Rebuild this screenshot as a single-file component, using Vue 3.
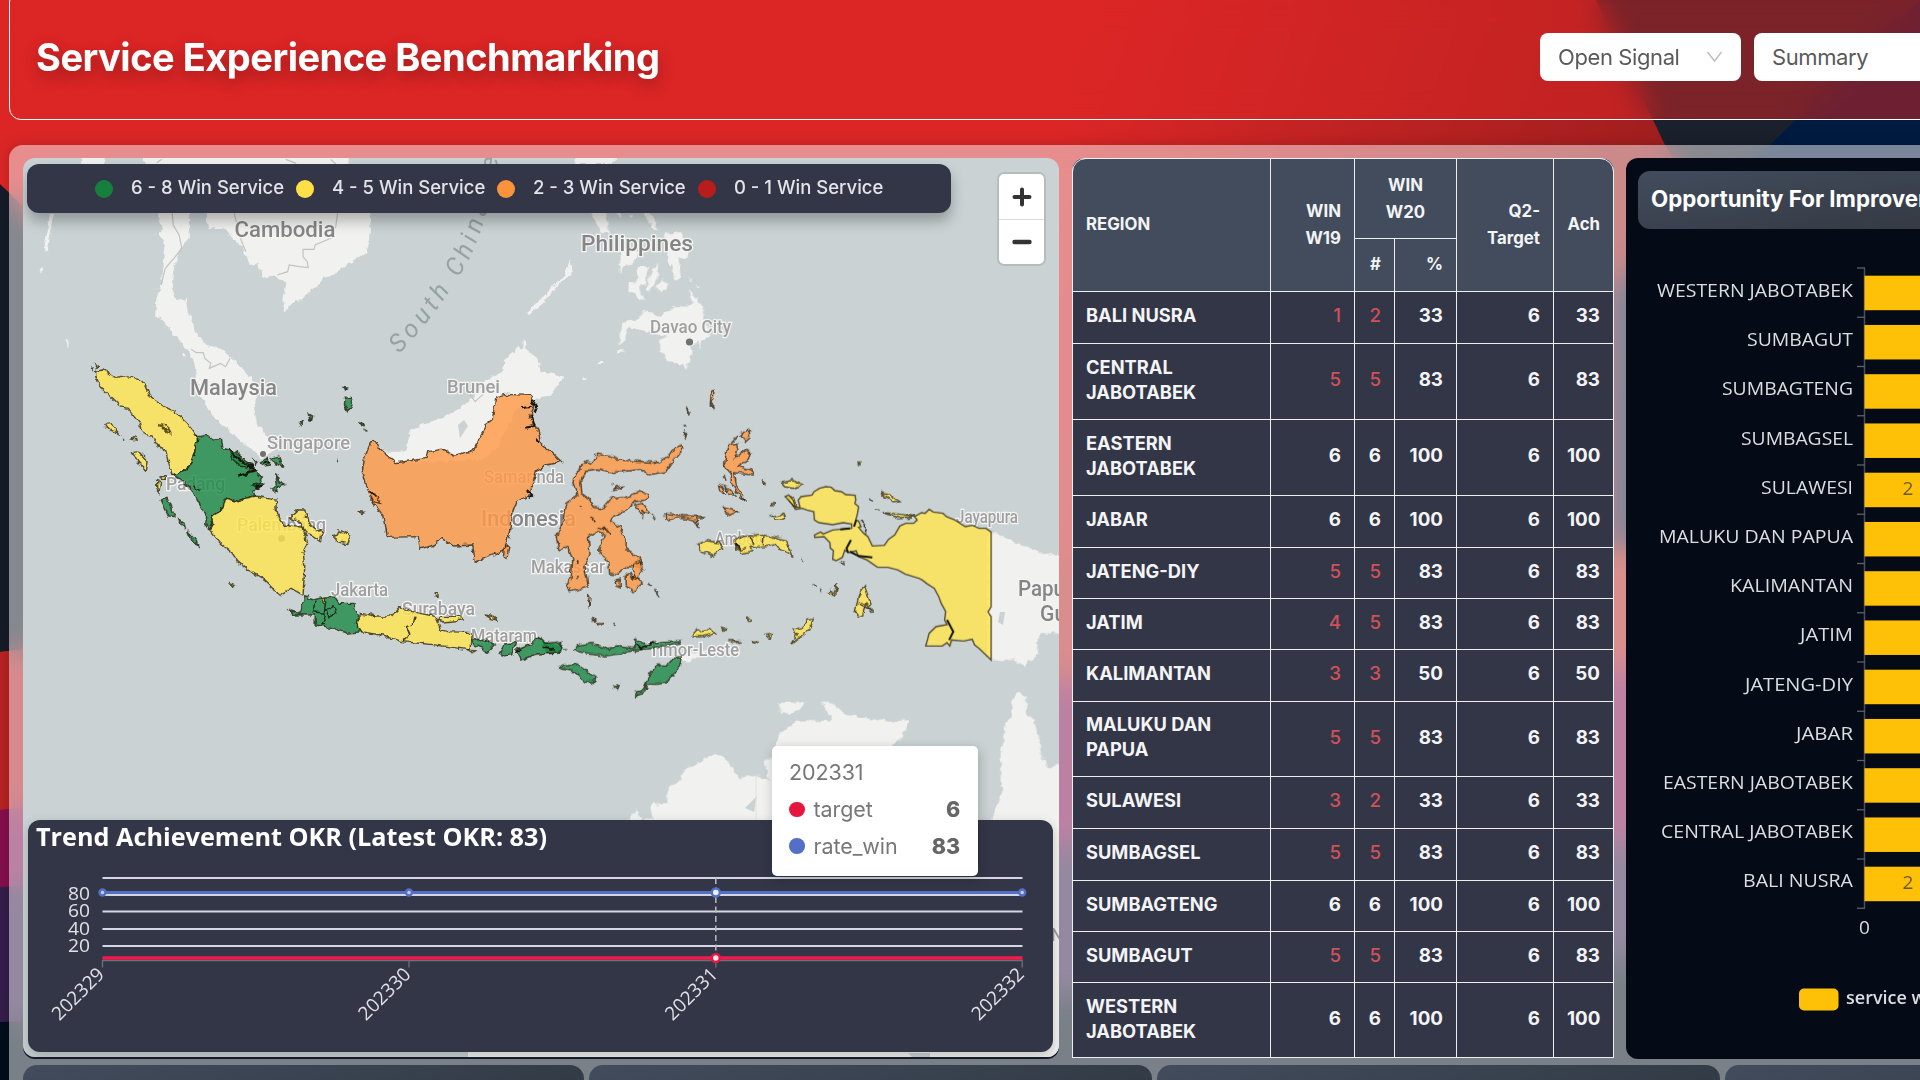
<script setup>
const wins = [
  { color: '#15803d', label: '6 - 8 Win Service' },
  { color: '#fde047', label: '4 - 5 Win Service' },
  { color: '#fb923c', label: '2 - 3 Win Service' },
  { color: '#b91c1c', label: '0 - 1 Win Service' }
]

const rows = [
  { name: 'BALI NUSRA', w19: 1, w20: 2, pct: 33, h: 52 },
  { name: 'CENTRAL JABOTABEK', w19: 5, w20: 5, pct: 83, h: 76 },
  { name: 'EASTERN JABOTABEK', w19: 6, w20: 6, pct: 100, h: 76 },
  { name: 'JABAR', w19: 6, w20: 6, pct: 100, h: 52 },
  { name: 'JATENG-DIY', w19: 5, w20: 5, pct: 83, h: 51 },
  { name: 'JATIM', w19: 4, w20: 5, pct: 83, h: 51 },
  { name: 'KALIMANTAN', w19: 3, w20: 3, pct: 50, h: 52 },
  { name: 'MALUKU DAN PAPUA', w19: 5, w20: 5, pct: 83, h: 75 },
  { name: 'SULAWESI', w19: 3, w20: 2, pct: 33, h: 52 },
  { name: 'SUMBAGSEL', w19: 5, w20: 5, pct: 83, h: 52 },
  { name: 'SUMBAGTENG', w19: 6, w20: 6, pct: 100, h: 51 },
  { name: 'SUMBAGUT', w19: 5, w20: 5, pct: 83, h: 51 },
  { name: 'WESTERN JABOTABEK', w19: 6, w20: 6, pct: 100, h: 76 }
]

const bars = [
  ['WESTERN JABOTABEK', 196], ['SUMBAGUT', 106], ['SUMBAGTENG', 131], ['SUMBAGSEL', 112],
  ['SULAWESI', 92, 2], ['MALUKU DAN PAPUA', 194], ['KALIMANTAN', 123], ['JATIM', 53],
  ['JATENG-DIY', 108], ['JABAR', 57], ['EASTERN JABOTABEK', 190], ['CENTRAL JABOTABEK', 192],
  ['BALI NUSRA', 110, 2]
]

const weeks = [[102, '202329'], [408.5, '202330'], [715.3, '202331'], [1021.7, '202332']]
const yTicks = [[80, 893], [60, 910.3], [40, 927.5], [20, 944.6]]

// text, x, baseline, width, size
const places = [
  ['Cambodia', 234.5, 237, 101, 22], ['Malaysia', 190, 395, 87, 22], ['Brunei', 447, 393, 53, 19],
  ['Singapore', 267, 449, 83, 18.5], ['Philippines', 581, 251, 112, 22], ['Davao City', 650, 333, 81, 18.5],
  ['Padang', 166, 490, 59, 18.5], ['Palembang', 237, 531, 89, 18.5], ['Jakarta', 331, 596, 57, 18.5],
  ['Surabaya', 402, 615, 73, 18.5], ['Mataram', 471, 642, 66, 18.5], ['Samarinda', 484, 483, 80, 18.5],
  ['Indonesia', 481, 526, 95, 22], ['Makassar', 531, 573, 74, 18.5], ['Ambon', 715, 545, 48, 18.5],
  ['Timor-Leste', 649, 656, 90, 18], ['Jayapura', 956, 523, 62, 18.5], ['Papua New', 1018, 596, 104, 22],
  ['Guinea', 1040, 621, 66, 22], ['N', 1051, 941, 12, 18]
]
</script>

<template>
  <div class="page">
    <svg class="backdrop" viewBox="0 0 1920 1080" width="1920" height="1080">
      <defs>
        <linearGradient id="red" gradientUnits="userSpaceOnUse" x1="1100" y1="0" x2="1750" y2="230">
          <stop offset="0" stop-color="#dc2626" />
          <stop offset="1" stop-color="#951d1d" />
        </linearGradient>
        <linearGradient id="red2" x1="0" y1="0" x2="1" y2="0">
          <stop offset="0" stop-color="#b92222" />
          <stop offset="1" stop-color="#c22a22" />
        </linearGradient>
      </defs>
      <rect width="1920" height="1080" fill="url(#red)" />
      <path d="M0 184L120 300L500 500L300 620L0 652Z" fill="#151c28" />
      <path d="M0 652L300 620L700 560L1300 560L1920 545V1080H0Z" fill="url(#red2)" />
      <path d="M1596 0L1665 145L1720 230L1920 0Z" fill="#1a202c" />
      <path d="M1920 0L1770 145L1612 290V545L1920 560Z" fill="#001a40" />
      <path d="M0 810L1065 680L1620 668L1920 660V1080H0Z" fill="#850f4e" />
      <path d="M0 887L1065 845L1620 845L1920 840V1080H0Z" fill="#351e4b" />
      <path d="M0 1022L1065 995L1620 960L1920 940V1080H0Z" fill="#000d1a" />
    </svg>

    <header class="header">
      <h1>Service Experience Benchmarking</h1>
      <div class="selects">
        <div class="select">
          <span>Open Signal</span>
          <svg width="17" height="12" viewBox="0 0 17 12"><path d="M1.5 1L8.5 10L15.5 1" fill="none" stroke="#bdbdbd" stroke-width="1.4" /></svg>
        </div>
        <div class="select"><span>Summary</span></div>
      </div>
    </header>

    <main class="board">
      <div class="main-row">
        <section class="map-card">
          <svg class="map" viewBox="23 158 1036 899" width="1036" height="899">
            <defs>
              <filter id="coast" x="-5%" y="-5%" width="110%" height="110%">
                <feTurbulence type="fractalNoise" baseFrequency="0.16" numOctaves="2" seed="4" />
                <feDisplacementMap in="SourceGraphic" scale="6" xChannelSelector="R" yChannelSelector="G" />
              </filter>
              <path id="sea" d="M399 354Q446 304 471 255Q494 205 502 130" />
            </defs>
            <rect x="23" y="158" width="1036" height="899" fill="#cad2d3" />

            <g class="land" filter="url(#coast)">
              <g transform="translate(0 150) scale(.34439 .33333)">
                <path d="M405 0L1015 0L1010 60L1050 140L1078 195L1070 290L1060 310L1020 335L965 375L935 380L930 400L895 430L860 455L825 487L820 470L832 395L800 378L770 385L755 365L750 340L725 345L710 300L680 270L650 235L605 240L598 190L590 150L550 190L548 265L525 290L505 350L498 410L512 450L540 445L545 490L560 510L565 545L600 585L640 595L690 640L735 690L745 740L738 770L745 820L770 850L800 900L760 925L720 890L650 830L610 790L590 750L570 690L565 640L545 600L510 560L465 500L450 500L455 440L470 400L480 290L460 250L470 240L460 190L440 100L430 60Z" />
                <path d="M215 0H320L300 42H240Z" />
                <path d="M145 190L157 192L142 260L135 312L125 290L137 240Z M112 362L124 348L120 366Z M190 570L200 572L198 590Z M530 612H540V620H530Z" />
                <path d="M1180 905L1190 840L1230 820L1300 800L1350 760L1380 740L1400 700L1425 680L1460 665L1465 635L1500 590L1518 600L1522 565L1530 600L1560 625L1570 660L1638 683L1615 710L1600 740L1560 745L1500 780L1440 900L1400 930L1250 935L1150 940L1095 890L1120 905Z" />
                <path d="M1528 492L1568 450L1608 408L1640 375L1656 325L1663 370L1630 395L1578 455L1535 495Z" />
              </g>
              <g transform="translate(540 150) scale(.34439 .33333)">
                <path d="M100 42L110 15L235 15L205 42Z M145 185L190 190L202 250L180 250L165 225Z M300 180L325 195L345 245L325 230Z M222 190L235 190L235 205Z M262 190L268 205L260 200Z" />
                <path d="M360 250L410 250L430 290L432 328L402 320L408 380L390 392L385 350L370 340L370 310Z" />
                <path d="M238 295L288 305L270 340L240 350L228 370Z M285 348L314 348L305 400L290 412L302 452L280 440L253 415L262 400L280 400Z M342 340L344 375L317 427L306 415L325 370Z M335 410L355 390L374 405L350 427Z M458 402L464 412H458Z M433 383L438 392H431Z" />
                <path d="M430 418L472 465L474 500L492 560L465 580L468 608L458 570L440 590L439 625L422 662L415 642L375 637L346 600L346 570L370 560L320 545L252 532L247 570L228 584L240 518L285 508L300 483L330 488L350 500L390 468L420 470L442 460Z" />
                <path d="M222 600H242V608H224Z M166 636H184V642H168Z M120 682H134V690H122Z" />
              </g>
              <g transform="translate(540 420) scale(.34439 .33333)">
                <path d="M1300 332L1400 375L1475 405L1525 408L1525 640L1460 640L1440 670L1447 700L1405 737L1370 720L1300 722Z" />
                <path d="M400 715L410 700L490 690L430 727Z" />
              </g>
              <g transform="translate(540 700) scale(.34439 .33333)">
                <path d="M698 8L765 8L760 25L730 42L693 35Z" />
                <path d="M250 370L280 328L300 358L330 355L322 313L370 312L370 265L410 240L415 210L470 185L510 160L545 180L580 235L620 225L665 240L650 190L680 160L693 105L740 65L835 62L850 55L815 2L855 18L890 45L1010 65L1075 60L1050 115L1010 150L980 370Z" />
                <path d="M1373 -5L1385 -28L1400 -20L1410 0L1415 45L1432 55L1447 110L1457 170L1480 205L1525 185L1525 1100L-210 1100L-210 1040L1300 1040L1310 365L1342 280L1337 160L1352 70L1365 60Z" />
              </g>
            </g>
            <path d="M908 1053H930V1057H912Z M745 808L757 796L754 812Z M458 425L464 420L468 426L460 438Z M1000 612L1005 612L1003 625L998 622Z" fill="#cad2d3" />

            <g class="borders" transform="translate(0 150) scale(.34439 .33333)">
              <path d="M500 190L503 225L520 255L528 295L505 325L480 355L475 375L468 405" />
              <path d="M680 190L690 230L700 270L714 305" />
              <path d="M805 375L835 365L840 345L870 350L895 353L892 335L880 320L880 298L912 298L915 285L960 265L965 250L975 230L980 190" />
              <path d="M555 598L570 608L590 608L595 625L612 640L608 655L640 640L655 650L668 625" />
              <path d="M455 38L470 28M830 28L860 40M960 28L975 42M1350 715L1380 755L1410 725" />
            </g>
            <path d="M756 776V820" stroke="#e2e2e0" />

            <g class="places">
              <text v-for="p in places" :key="p[0]" :x="p[1]" :y="p[2]" :textLength="p[3]" :font-size="p[4]" :class="{ big: p[4] > 20 }" lengthAdjust="spacingAndGlyphs">{{ p[0] }}</text>
              <circle cx="689.5" cy="342" r="3.6" /><circle cx="263" cy="454" r="3" /><circle cx="281.500" cy="538.500" r="3.500" />
            </g>
            <text class="sea-name"><textPath href="#sea">South China Sea</textPath></text>

            <g filter="url(#coast)" class="area">
              <!-- Sumatra, Java -->
              <g transform="translate(0 420) scale(.34439 .33333)">
                <path class="y" d="M278 -145L300 -150L335 -125L365 -130L405 -125L425 -100L440 -65L485 -35L515 -20L545 10L575 50L565 95L555 130L540 150L500 165L480 90L460 80L440 50L415 40L405 10L370 -35L350 -40L310 -80L290 -100L278 -130Z" />
                <path class="g" d="M575 50L600 45L620 60L640 58L645 85L670 90L690 105L720 125L745 155L762 175L750 190L755 205L735 210L740 228L710 235L695 245L655 235L650 255L640 275L615 290L618 310L605 328L597 315L600 290L575 245L560 215L530 180L500 165L540 150L555 130L565 95Z" />
                <path class="y" d="M655 235L695 245L710 235L740 228L800 240L803 280L825 315L880 325L893 370L880 395L885 440L880 525L845 505L810 528L790 500L770 480L720 450L690 425L675 400L640 370L608 328L618 310L615 290L640 275L650 255Z" />
                <path class="y" d="M840 295L865 270L885 270L895 310L935 340L930 362L890 335L870 305Z M980 345L985 330L1018 345L1010 372L980 365L968 350Z" />
                <path class="y" d="M305 10L320 8L345 40L320 30Z M383 57L395 48L398 60Z M385 95L400 92L430 125L425 152L400 125Z M455 182L466 185L462 215L455 200Z M468 170H480V178H468Z M266 -158L272 -148M276 -168L284 -162L280 -155Z M355 55L360 62M670 492L682 496L678 502Z M465 12L482 15L495 38L482 35Z M474 20L486 32" />
                <path class="g" d="M468 240L485 235L508 290L490 288Z M522 300L535 310L538 324L526 316Z M545 332L570 360L575 378L555 358Z" />
                <path class="g" d="M755 130L775 115L785 135L765 138Z M785 115L810 108L820 138L800 130Z M800 160L810 185L828 195L810 200L800 218L790 208L805 195Z M735 115L748 125L742 138Z M665 88L690 95L695 120L730 130L735 145L700 138L678 120Z M730 195L762 190L748 205Z M690 170L715 165L725 150L735 155" />
                <path class="g" d="M1003 -65L1018 -68L1027 -40L1012 -28L1000 -45Z M996 -98L1006 -96L1000 -90Z M898 -18L908 -12L904 5Z M870 8L880 6L875 16Z M1046 8L1054 10L1050 16Z M1058 30L1064 34L1060 36Z M976 122L982 126Z" />
                <path class="g" d="M840 570L870 580L885 530L910 540L945 530L975 535L985 550L1025 550L1040 585L1035 610L1048 635L1010 640L960 622L915 615L915 585L850 585Z" />
                <path class="y" d="M1048 580L1090 588L1140 588L1165 558L1180 570L1220 580L1265 590L1280 630L1300 635L1368 638L1365 690L1300 680L1240 672L1165 665L1110 645L1048 635L1035 610Z M1270 600L1280 590L1340 588L1345 600L1290 606Z" />
                <path class="line" d="M1205 590L1200 612L1180 620L1190 645L1170 665M918 545L910 575L940 580L945 610L930 612M945 545L942 575L970 560L975 580L955 590L950 570M560 195L580 215" />
                <path class="y" d="M1410 585L1430 590L1445 602L1425 596Z M1264 518H1272V526H1264Z M1358 690L1378 692L1370 698Z M935 535H942V550H935Z" />
                <path class="g" d="M1368 660L1410 658L1438 675L1415 700L1400 685L1375 675Z M1450 700L1465 672L1498 668L1485 705L1470 708Z M1500 690L1540 675L1560 655L1580 668L1632 680L1625 700L1560 702L1515 720Z" />
                <!-- Kalimantan -->
                <path class="o" d="M1090 60L1105 90L1150 128L1240 115L1245 95L1285 88L1320 105L1375 92L1390 60L1410 25L1405 15L1430 -5L1440 -70L1470 -77L1540 -74L1552 -40L1540 -10L1568 40L1573 75L1600 95L1630 125L1588 135L1560 150L1545 190L1540 225L1500 245L1485 290L1480 330L1465 390L1380 427L1372 375L1320 378L1285 355L1260 375L1220 388L1215 350L1125 352L1115 290L1085 250L1065 200L1052 150L1060 110L1075 70Z" />
                <path class="o" d="M1045 272L1056 274L1050 282Z M1465 380L1478 375L1472 418L1462 410Z M1070 215L1095 225L1105 250L1085 245L1070 230" />
                <path class="dark" d="M1510 -35L1545 -40M1525 20L1550 15L1545 -15M1545 -60L1560 -40L1552 -20M1530 210L1545 225L1535 235M1558 55L1568 70M1075 220L1095 232M690 170L740 150L720 140M670 95L700 125L735 140M742 200L760 198M765 132L785 125M1500 700L1510 690" />
              </g>
              <g transform="translate(540 420) scale(.34439 .33333)">
                <!-- Sulawesi and Maluku Utara -->
                <path class="o" d="M165 102L200 108L230 120L300 125L345 128L375 108L395 80L410 75L412 95L385 125L365 155L315 165L290 150L200 158L170 150L130 155L118 185L122 225L145 240L155 262L180 265L205 235L250 232L290 215L312 220L308 240L275 245L255 270L210 290L205 305L230 320L250 360L250 385L295 420L290 440L250 440L225 465L202 462L200 430L170 390L180 370L190 345L170 335L140 350L145 400L130 440L140 500L110 510L85 515L75 490L90 475L95 420L80 380L55 390L47 350L65 310L75 250L110 225L95 185L115 145L135 125L150 130Z" />
                <path class="o" d="M250 465L262 458L270 480L275 430L290 425L298 450L285 470L297 490L270 515L250 495Z M218 485L230 480L230 502L220 498Z M140 525L148 530L145 562Z M275 255L300 250L318 280L300 275L298 290L285 270Z M205 190L212 196M212 212L225 200L245 198L225 208Z M150 592L160 600L156 604Z M165 608H182V614H168Z M216 612L222 618Z M325 285L335 298M315 490L325 498M335 510L346 532" />
                <path class="o" d="M548 75L570 70L575 90L565 115L600 88L612 95L605 120L575 138L612 150L618 165L565 158L570 195L595 245L580 230L555 190L555 160L535 140L540 100Z M583 45L605 25L612 45L595 62Z M555 70L570 52L575 48" />
                <path class="o" d="M518 195L530 200L535 222L522 215Z M536 198L548 205L565 225L545 222Z M530 262L575 275L555 285L540 278Z M363 280L415 287L480 290L455 295L462 327L448 300L412 292L365 300Z M535 165L540 180M645 180L658 192L648 188Z" />
                <path class="o" d="M497 -85L508 -84L505 -65L496 -55L502 -38L494 -45Z M425 -38L436 -24L432 -16Z M420 18L425 22M423 38L426 44L421 56Z" />
                <path class="g" d="M70 688L80 685M100 690L110 675L150 670L195 685L230 680L270 685L280 658L310 675L350 665L410 662L405 672L330 685L270 692L230 702L190 708L120 700Z M0 655L15 670L60 665L60 695L20 700" />
                <path class="g" d="M55 745L65 735L110 732L160 770L155 790L130 785L100 755Z M410 710L405 740L370 785L340 790L310 790L305 815L278 828L278 818L300 808L320 760L340 735L370 735L390 712Z M215 800L230 796L225 808Z" />
                <path class="y" d="M440 650L455 633L495 628L505 640L475 650Z M530 625L540 628L534 634Z M600 597H610V604H602Z M550 662L585 666L560 668Z M620 663H630V668H622Z M655 645L675 642L672 655Z M735 625L760 625L775 600L795 598L780 630L730 672L745 645Z M835 520L845 510L850 525Z M865 492L858 525L850 528Z" />
                <path class="y" d="M942 498L958 545L965 578L945 550L937 585L925 590L915 578L925 525Z M925 540L955 560M560 365L580 350L650 345L715 360L733 408L700 390L680 375L640 382L610 378L615 395L580 400L570 385Z M458 375L480 362L520 368L530 385L498 408L462 390Z" />
                <path class="y" d="M700 188L735 182L762 195L735 205L710 200Z M670 290L705 283L710 300L690 300Z M722 235L738 232L748 262L735 258Z M672 248H680V254H672Z M990 218L1015 225L1045 245L1025 248Z M995 278L1040 282L1092 290L1040 293Z M972 266L986 268M958 236L966 244Z M924 126H932V131H924Z M758 415L766 422M815 505L818 515M795 490L800 498" />
                <path class="line" d="M565 372L580 390L600 385M610 350L618 372M650 348L648 375M942 340L945 318L935 300M925 550L960 570M270 470L290 480M115 260L122 262M150 290L158 305M185 320L205 345M170 325L195 330M870 425L888 432M590 232L596 245M110 420L114 430M110 470V480" />
                <path class="dark" d="M275 670L290 685L330 668M10 680L40 690M568 368L578 388" />
              </g>
            </g>
            <g class="area" transform="translate(540 420) scale(.34439 .33333)">
              <path class="y" d="M712 230L722 225L735 240L742 262L755 262L750 240L758 230L790 225L796 215L812 205L830 200L846 202L856 212L875 215L888 224L915 226L917 240L914 250L925 260L922 280L917 300L925 303L932 320L925 322L940 340L952 350L965 378L1000 376L1012 358L1030 345L1045 318L1062 310L1085 310L1095 300L1088 290L1108 278L1118 280L1130 268L1142 276L1170 280L1180 290L1205 300L1235 320L1255 316L1275 325L1295 325L1310 336L1310 560L1301 576L1310 590L1310 720L1290 700L1275 685L1262 675L1255 658L1230 663L1195 660L1190 678L1182 668L1168 678L1120 678L1125 660L1130 640L1150 620L1182 614L1175 600L1178 575L1165 550L1158 530L1145 505L1125 492L1110 480L1100 475L1060 462L1040 450L1010 442L980 442L950 420L925 410L918 392L895 398L885 390L878 412L860 422L850 418L852 392L843 384L842 368L825 350L798 352L797 345L815 336L822 342L850 330L872 328L905 325L905 312L880 308L850 314L810 308L797 300L795 275L775 270L762 265L742 268L735 255Z" />
              <path class="dark" d="M1182 600L1200 635L1188 660M895 398L890 385L903 360M918 300L912 320M872 328L900 325M900 395L925 408L965 412" />
            </g>
          </svg>

          <div class="legend">
            <div v-for="w in wins" :key="w.label" class="legend-item">
              <i :style="{ background: w.color }"></i><span>{{ w.label }}</span>
            </div>
          </div>

          <div class="zoom">
            <div><svg width="20" height="20" viewBox="0 0 20 20"><path d="M10 2.500V17.500M2.500 10H17.500" stroke="#333" stroke-width="4" stroke-linecap="round" /></svg></div>
            <div><svg width="20" height="20" viewBox="0 0 20 20"><path d="M2.500 10H17.500" stroke="#333" stroke-width="4.400" stroke-linecap="round" /></svg></div>
          </div>

          <div class="trend">
            <svg viewBox="27.5 820 1025 232" width="1025" height="232">
              <text class="trend-title" x="35.500" y="845.500" textLength="511" lengthAdjust="spacingAndGlyphs">Trend Achievement OKR (Latest OKR: 83)</text>
              <path d="M102 878H1022M102 895H1022M102 911.500H1022M102 929H1022M102 946H1022" stroke="#d3d6e2" stroke-width="1.800" />
              <path d="M102 960.500H1022" stroke="#6e7079" stroke-width="1.500" />
              <path v-for="w in weeks" :key="w[1]" :d="`M${w[0]} 960V967.500`" stroke="#6e7079" stroke-width="1.300" />
              <path d="M715.300 878V960" stroke="#b9b9c2" stroke-width="1.500" stroke-dasharray="6 3.500" />
              <path d="M102 892.500H1022" stroke="#5470c6" stroke-width="3" />
              <path d="M102 958H1022" stroke="#f31a4c" stroke-width="3.500" />
              <g fill="#c4cdee" stroke="#5470c6" stroke-width="2.400">
                <circle cx="102" cy="892.500" r="3" /><circle cx="408.500" cy="892.500" r="3" />
                <circle cx="715.300" cy="892.500" r="4" fill="#eef0fa" /><circle cx="1021.700" cy="892.500" r="3" />
              </g>
              <circle cx="715.300" cy="958" r="4" fill="#f4e6ea" stroke="#e5173f" stroke-width="2.500" />
              <g class="axis">
                <text v-for="t in yTicks" :key="t[0]" x="89.500" :y="t[1] + 7" textLength="22" lengthAdjust="spacingAndGlyphs" text-anchor="end">{{ t[0] }}</text>
                <text v-for="w in weeks" :key="w[1]" text-anchor="end" textLength="65" lengthAdjust="spacingAndGlyphs" :transform="`translate(${w[0] + 3} 975.500) rotate(-45)`">{{ w[1] }}</text>
              </g>
            </svg>
          </div>

          <div class="tooltip">
            <div class="tt-title">202331</div>
            <div class="tt-row"><i style="background:#e5173f"></i><span>target</span><b>6</b></div>
            <div class="tt-row"><i style="background:#5470c6"></i><span>rate_win</span><b>83</b></div>
          </div>
        </section>

        <section class="table-card">
          <table>
            <colgroup>
              <col style="width:198px" /><col style="width:84px" /><col style="width:40px" /><col style="width:62px" /><col style="width:97px" /><col style="width:60px" />
            </colgroup>
            <thead>
              <tr class="h1"><th rowspan="2" class="left">REGION</th><th rowspan="2">WIN<br />W19</th><th colspan="2" class="center">WIN<br />W20</th><th rowspan="2">Q2-<br />Target</th><th rowspan="2">Ach</th></tr>
              <tr class="h2"><th>#</th><th>%</th></tr>
            </thead>
            <tbody>
              <tr v-for="r in rows" :key="r.name" :style="{ height: r.h + 'px' }">
                <td class="left"><div class="name">{{ r.name }}</div></td>
                <td :class="{ miss: r.w19 < 6 }">{{ r.w19 }}</td>
                <td :class="{ miss: r.w20 < 6 }">{{ r.w20 }}</td>
                <td>{{ r.pct }}</td><td>6</td><td>{{ r.pct }}</td>
              </tr>
            </tbody>
          </table>
        </section>

        <section class="chart-card">
          <div class="chart-title">Opportunity For Improvement</div>
          <svg viewBox="1626 229 360 828" width="360" height="828">
            <path d="M1864.500 268V908.500" stroke="#4b4e58" stroke-width="1.500" />
            <path v-for="n in 14" :key="n" :d="`M1857 ${268 + (n - 1) * 49.25}H1865`" stroke="#5d606a" stroke-width="1.300" />
            <g v-for="(b, i) in bars" :key="b[0]">
              <rect x="1864.500" :y="275.700 + i * 49.25" width="120" height="34.500" fill="#ffc107" />
              <text class="cat" x="1853" :y="297 + i * 49.2" text-anchor="end" :textLength="b[1]" lengthAdjust="spacingAndGlyphs">{{ b[0] }}</text>
              <text v-if="b[2]" class="val" x="1908" :y="494.500 + (i - 4) * 49.25" text-anchor="middle">{{ b[2] }}</text>
            </g>
            <text class="cat" x="1864.500" y="934" text-anchor="middle">0</text>
            <rect x="1799" y="988.500" width="39.500" height="22" rx="5" fill="#ffc107" />
            <text class="leg" x="1846" y="1003.500">service win</text>
          </svg>
        </section>
      </div>
      <div class="cards"><div></div><div></div><div></div><div></div></div>
    </main>
  </div>
</template>

<style>
body { margin: 0; overflow: hidden; }
</style>

<style scoped>
.page {
  position: relative;
  width: 1920px;
  height: 1080px;
  overflow: hidden;
  font-family: Inter, "Liberation Sans", sans-serif;
  display: flex;
  flex-direction: column;
}
.backdrop { position: absolute; inset: 0; }
.header {
  position: relative;
  box-sizing: border-box;
  flex: none;
  height: 130px;
  width: 2000px;
  margin: -10px 0 25px 9px;
  border: 1px solid #fff;
  border-radius: 12px;
  background: rgba(220, 38, 38, .5);
  backdrop-filter: blur(14px);
  display: flex;
  align-items: flex-start;
}
h1 {
  margin: 45px 0 0 26px;
  width: 1504px;
  flex: none;
  font-size: 38px;
  line-height: 42px;
  font-weight: 700;
  letter-spacing: -.5px;
  color: #fff;
  text-shadow: 0 6px 16px rgba(0, 0, 0, .3);
}
.selects { display: flex; gap: 13px; margin-top: 42px; }
.select {
  box-sizing: border-box;
  flex: none;
  width: 201px;
  height: 48px;
  border-radius: 8px;
  background: #fff;
  padding: 0 18px;
  display: flex;
  align-items: center;
  justify-content: space-between;
  font-size: 22px;
  letter-spacing: -.4px;
  color: #5a5a5a;
}
.board {
  position: relative;
  box-sizing: border-box;
  flex: none;
  width: 2020px;
  height: 1000px;
  margin-left: 9px;
  padding: 13px 0 0 14px;
  border-radius: 14px;
  background: rgba(243, 244, 246, .5);
  backdrop-filter: blur(14px);
  box-shadow: 0 0 14px rgba(0, 0, 0, .18);
}
.main-row { display: flex; height: 901px; }
.main-row > section { flex: none; }
.map-card {
  position: relative;
  width: 1036px;
  height: 899px;
  border-radius: 12px;
  overflow: hidden;
  box-shadow: 0 2px 0 #131c2b;
  margin-right: 13px;
}
.map { display: block; }
.land { fill: #f1f1ef; }
.borders { fill: none; stroke: #c3c3c2; stroke-width: 1.2; }
.borders path, .area path { vector-effect: non-scaling-stroke; }
.area path { stroke: rgba(30, 22, 5, .72); stroke-width: 1.4; fill-opacity: .82; }
.y { fill: #ffe550; }
.g { fill: #1f8b49; }
.o { fill: #ff9a48; }
.area .line { fill: none; stroke: rgba(20, 16, 8, .8); stroke-width: 1.4; }
.area .dark { fill: none; stroke: #14130c; stroke-width: 2; }
.places { font-family: Roboto, sans-serif; fill: #a09f9f; stroke: #f3f4f3; stroke-width: 2.6; paint-order: stroke; font-weight: 500; }
.places .big { fill: #858585; }
.places circle { fill: #707070; stroke-width: 1; }
.sea-name { font-family: Roboto, sans-serif; font-style: italic; font-size: 25px; letter-spacing: 4.6px; fill: #97a3a3; }
.legend {
  position: absolute;
  box-sizing: border-box;
  left: 4px;
  top: 6px;
  width: 924px;
  height: 49px;
  border-radius: 12px;
  background: #333647;
  box-shadow: 0 8px 14px rgba(0, 0, 0, .28);
  padding-left: 68px;
  display: flex;
  align-items: center;
}
.legend-item { width: 201px; flex: none; display: flex; align-items: center; color: #e3e4e8; font-size: 18.500px; font-weight: 500; white-space: nowrap; }
.legend-item i { width: 18px; height: 18px; border-radius: 50%; margin-right: 18px; }
.legend-item span { position: relative; top: -2px; }
.zoom {
  position: absolute;
  left: 976px;
  top: 16px;
  width: 45px;
  height: 90px;
  border-radius: 5px;
  background: #fff;
  box-shadow: 0 0 0 2px rgba(0, 0, 0, .1);
}
.zoom div { height: 45px; display: flex; align-items: center; justify-content: center; }
.zoom div + div { border-top: 1px solid #ddd; height: 44px; }
.trend {
  position: absolute;
  left: 4.5px;
  top: 662px;
  width: 1025px;
  height: 232px;
  border-radius: 12px;
  background: #333647;
  box-shadow: 0 4px 12px rgba(0, 0, 0, .2);
}
.trend svg { display: block; }
.trend-title { font: 700 25px "Open Sans", sans-serif; fill: #fff; }
.axis { font-family: "Open Sans", sans-serif; font-size: 19px; font-weight: 500; fill: #e0e1e7; }
.tooltip {
  position: absolute;
  box-sizing: border-box;
  left: 749px;
  top: 588px;
  width: 206px;
  height: 130px;
  border-radius: 5px;
  background: #fff;
  box-shadow: 1px 3px 12px rgba(0, 0, 0, .22);
  padding: 11px 18px 0 17px;
  color: #777;
  font-size: 21.500px;
}
.tt-title { height: 30px; line-height: 30px; letter-spacing: -.1px; }
.tt-row { display: flex; align-items: center; height: 36.500px; margin-top: 4px; letter-spacing: -.1px; }
.tt-row + .tt-row { margin-top: 0; }
.tt-row i { width: 15.500px; height: 15.500px; border-radius: 50%; margin-right: 9px; }
.tt-row b { margin-left: auto; color: #666; font-weight: 800; }
.table-card { width: 542px; height: 900px; margin-right: 12px; border-radius: 14px 14px 0 0; overflow: hidden; position: relative; }
.table-card::after {
  content: "";
  position: absolute;
  inset: 0;
  border: 1px solid #eceef0;
  border-radius: 14px 14px 0 0;
}
table {
  width: 542px;
  border-collapse: collapse;
  table-layout: fixed;
  background: #333647;
  color: #f3f4f6;
}
th, td { border: 1px solid #eceef0; padding: 0 13px; text-align: right; box-sizing: border-box; }
thead { background: #424c5d; }
th { font-size: 16.800px; font-weight: 700; line-height: 27px; padding-bottom: 1px; }
.h1 { height: 80px; }
.h2 { height: 53px; }
td { font-size: 18.800px; font-weight: 700; padding-bottom: 4px; }
th.left, td.left { text-align: left; }
th.center { text-align: center; padding: 0; }
.name { width: 140px; font-size: 18.300px; line-height: 25px; }
.miss { color: #d05058; font-weight: 500; }
.chart-card {
  width: 360px;
  height: 901px;
  box-sizing: border-box;
  border-radius: 12px;
  background: #050b16;
  padding-top: 13px;
}
.chart-title {
  box-sizing: border-box;
  width: 380px;
  height: 58px;
  margin-left: 12px;
  padding-left: 13px;
  border-radius: 12px;
  background: linear-gradient(170deg, #424c5d, #33373f);
  color: #fff;
  font-size: 22.300px;
  font-weight: 700;
  line-height: 55px;
  white-space: nowrap;
}
.chart-card svg { display: block; }
.cat { font-family: "Open Sans", sans-serif; font-size: 19px; font-weight: 500; fill: #dcdde0; }
.val { font-family: "Open Sans", sans-serif; font-size: 19px; fill: #6b5a20; }
.leg { font-family: "Open Sans", sans-serif; font-size: 18px; font-weight: 600; fill: #dcdde0; }
.cards { display: flex; gap: 5px; margin-top: 6px; }
.cards div { flex: none; width: 563px; height: 90px; border-radius: 14px; background: linear-gradient(165deg, #424c5d, #323a45 70%); }
.cards div:first-child { width: 561px; }
</style>
